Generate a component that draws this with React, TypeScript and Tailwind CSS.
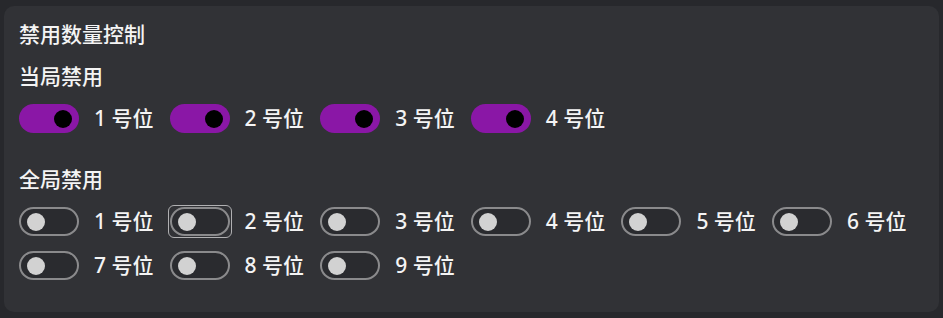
import React from "react";

const font = { fontFamily: '"Segoe UI", "Noto Sans", "Noto Sans CJK SC", sans-serif' };

function Toggle({ on, focused }: { on: boolean; focused?: boolean }) {
  const pill = on ? (
    <span className="flex h-[29px] w-[60px] items-center justify-end rounded-full bg-[#8a17a6] pr-[7px]">
      <span className="h-[18px] w-[18px] rounded-full bg-black" />
    </span>
  ) : (
    <span className="flex h-[29px] w-[60px] items-center rounded-full border-2 border-[#8a8a8c] bg-[#2a2b2f] pl-[6px]">
      <span className="h-[18px] w-[18px] rounded-full bg-[#d2d2d2]" />
    </span>
  );
  if (!focused) return pill;
  return <span className="-m-[2px] rounded-[6px] border border-[#b0b0b2] p-[1px]">{pill}</span>;
}

function Item({ n, on, focused }: { n: number; on: boolean; focused?: boolean }) {
  return (
    <div className="flex w-[150.6px] items-center">
      <Toggle on={on} focused={focused} />
      <span className="ml-[15px] text-[21px] font-medium leading-[29px] text-[#f4f4f4]">{n} 号位</span>
    </div>
  );
}

export default function App() {
  return (
    <div className="min-h-[318px] bg-[#27282c] px-[4px] pt-[6px] pb-[8px]" style={font}>
      <section className="rounded-[10px] bg-[#313236] px-[15px] pt-[16px] pb-[32px]">
        <h2 className="text-[21px] font-medium leading-[24px] text-[#f4f4f4]">禁用数量控制</h2>
        <h3 className="mt-[18px] text-[21px] font-medium leading-[24px] text-[#f4f4f4]">当局禁用</h3>
        <div className="mt-[16px] flex flex-wrap">
          {[1, 2, 3, 4].map((n) => (
            <Item key={n} n={n} on />
          ))}
        </div>
        <h3 className="mt-[34px] text-[21px] font-medium leading-[24px] text-[#f4f4f4]">全局禁用</h3>
        <div className="mt-[16px] flex flex-wrap gap-y-[15px]">
          {[1, 2, 3, 4, 5, 6, 7, 8, 9].map((n) => (
            <Item key={n} n={n} on={false} focused={n === 2} />
          ))}
        </div>
      </section>
    </div>
  );
}
